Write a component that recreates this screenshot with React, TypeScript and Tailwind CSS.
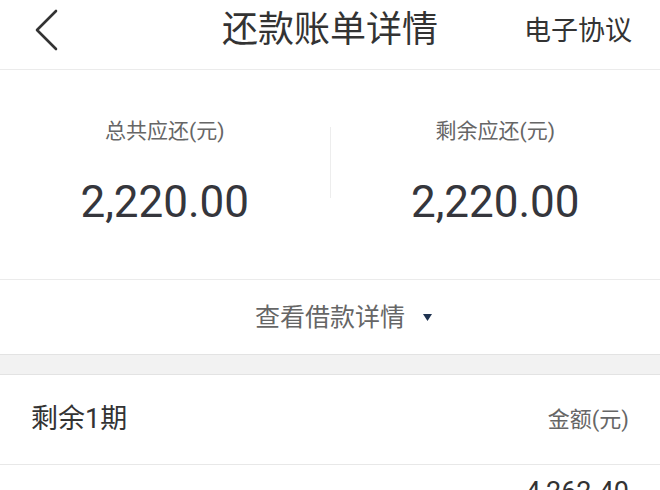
export default function App() {
  const font = { fontFamily: '"Roboto", "Noto Sans CJK SC", sans-serif' };

  return (
    <div className="w-[660px] h-[490px] overflow-hidden bg-white" style={font}>
      {/* header */}
      <div className="grid h-[70px] grid-cols-[1fr_auto_1fr] items-center border-b border-[#ebebeb] pb-[9px]">
        <div className="pl-[35px]">
          <svg width="24" height="42" viewBox="0 0 24 42" fill="none">
            <polyline points="21,2 2,21 21,40" stroke="#333" strokeWidth="2.6" strokeLinecap="round" strokeLinejoin="round" />
          </svg>
        </div>
        <div className="text-[36px] leading-none text-[#333]">还款账单详情</div>
        <div className="pr-[28px] pt-[3px] text-right text-[27px] leading-none text-[#333]">电子协议</div>
      </div>

      {/* summary */}
      <div className="flex h-[210px] items-start border-b border-[#ebebeb]">
        <div className="flex flex-1 flex-col items-center pt-[51px]">
          <span className="text-[21px] leading-none text-[#666]">总共应还(元)</span>
          <span className="mt-[38px] text-[44px] leading-none text-[#35363c]">2,220.00</span>
        </div>
        <div className="mt-[57px] h-[71px] w-px bg-[#ededed]" />
        <div className="flex flex-1 flex-col items-center pt-[51px]">
          <span className="text-[21px] leading-none text-[#666]">剩余应还(元)</span>
          <span className="mt-[38px] text-[44px] leading-none text-[#35363c]">2,220.00</span>
        </div>
      </div>

      {/* toggle */}
      <div className="flex h-[74px] items-center justify-center gap-[18px] pl-[27px]">
        <span className="text-[25px] leading-none text-[#666]">查看借款详情</span>
        <svg width="9" height="7" viewBox="0 0 9 7">
          <polygon points="0,0 9,0 4.5,7" fill="#1f3350" />
        </svg>
      </div>

      <div className="h-[21px] border-y border-[#e3e3e3] bg-[#f2f2f2]" />

      {/* period row */}
      <div className="flex h-[90px] items-center justify-between border-b border-[#e8e8e8] px-[31px]">
        <span className="text-[27px] leading-none text-[#333]">剩余1期</span>
        <span className="text-[22px] leading-none text-[#666]">金额(元)</span>
      </div>

      <div className="flex justify-end pr-[31px] pt-[14px]">
        <span className="text-[27px] leading-none text-[#333]">4,262.40</span>
      </div>
    </div>
  );
}
